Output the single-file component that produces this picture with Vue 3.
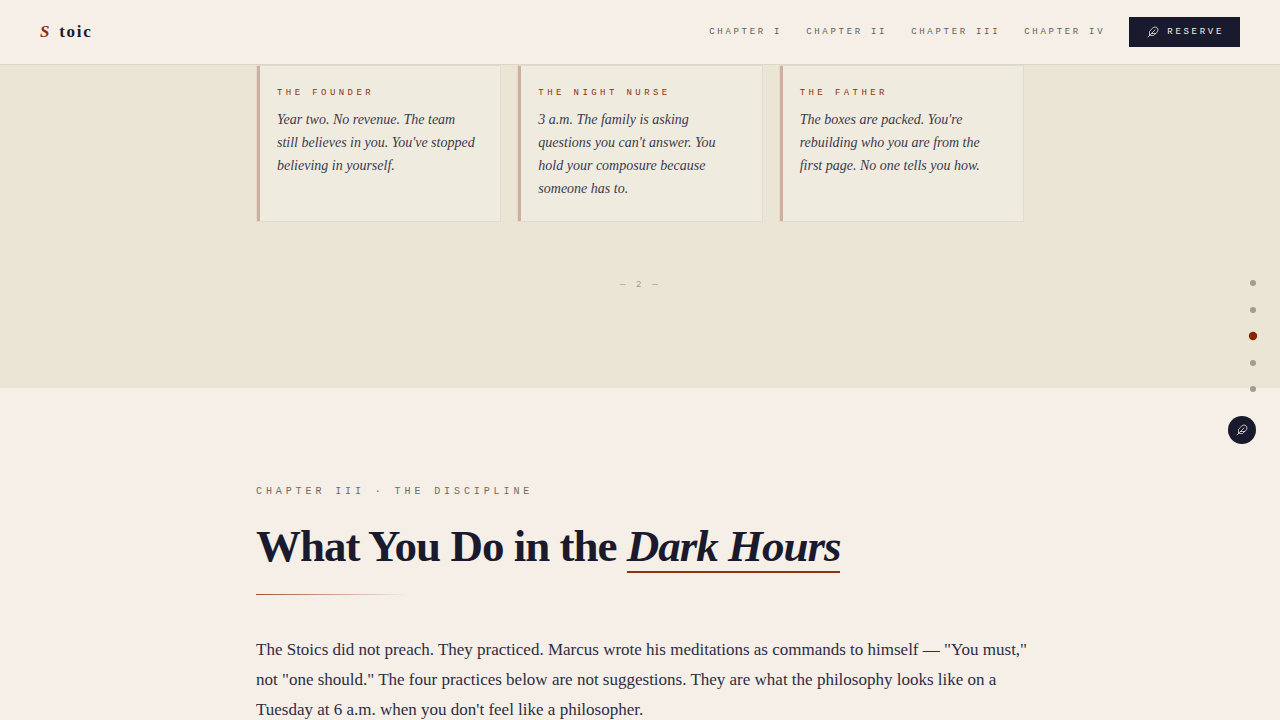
<script setup>
const chapters = ['I', 'II', 'III', 'IV']

const voices = [
  { who: 'The Founder', text: "Year two. No revenue. The team still believes in you. You've stopped believing in yourself." },
  { who: 'The Night Nurse', text: "3 a.m. The family is asking questions you can't answer. You hold your composure because someone has to." },
  { who: 'The Father', text: "The boxes are packed. You're rebuilding who you are from the first page. No one tells you how." }
]

const sections = ['Cover', 'Chapter I', 'Chapter II', 'Chapter III', 'Chapter IV']
const current = 2
</script>

<template>
  <div class="page">
    <header class="topbar">
      <a class="brand" href="#"><span class="brand-mark">S</span><span>toic</span></a>
      <nav class="links" aria-label="Chapters">
        <a v-for="c in chapters" :key="c" class="link" :href="'#chapter-' + c">Chapter {{ c }}</a>
        <button type="button" class="reserve">
          <svg class="quill" viewBox="0 0 24 24" aria-hidden="true">
            <path d="M12.67 19a2 2 0 0 0 1.416-.588l6.154-6.172a6 6 0 0 0-8.49-8.49L5.586 9.914A2 2 0 0 0 5 11.328V18a1 1 0 0 0 1 1z" />
            <path d="M16 8 2 22" />
            <path d="M17.5 15H9" />
          </svg>
          Reserve
        </button>
      </nav>
    </header>

    <main>
      <section class="voices">
        <div class="column">
          <div class="cards">
            <article v-for="v in voices" :key="v.who" class="card">
              <h3 class="who">{{ v.who }}</h3>
              <p class="quote">{{ v.text }}</p>
            </article>
          </div>
          <p class="folio">— 2 —</p>
        </div>
      </section>

      <section id="chapter-III" class="chapter">
        <div class="column">
          <p class="eyebrow">Chapter III · The Discipline</p>
          <h2 class="title">What You Do in the <em>Dark Hours</em></h2>
          <div class="rule"></div>
          <p class="lede">
            The Stoics did not preach. They practiced. Marcus wrote his meditations as commands to
            himself — "You must," not "one should." The four practices below are not suggestions. They
            are what the philosophy looks like on a Tuesday at 6 a.m. when you don't feel like a
            philosopher.
          </p>
        </div>
      </section>
    </main>

    <aside class="rail">
      <nav class="dots" aria-label="Sections">
        <button
          v-for="(s, i) in sections"
          :key="s"
          type="button"
          class="dot"
          :class="{ active: i === current }"
          :aria-label="s"
        ></button>
      </nav>
      <button type="button" class="fab" aria-label="Reserve a copy">
        <svg class="quill" viewBox="0 0 24 24" aria-hidden="true">
          <path d="M12.67 19a2 2 0 0 0 1.416-.588l6.154-6.172a6 6 0 0 0-8.49-8.49L5.586 9.914A2 2 0 0 0 5 11.328V18a1 1 0 0 0 1 1z" />
          <path d="M16 8 2 22" />
          <path d="M17.5 15H9" />
        </svg>
      </button>
    </aside>
  </div>
</template>

<style>
body {
  background: #f5efe7;
}
</style>

<style scoped>
.page {
  min-height: 100vh;
  background: #f5efe7;
  color: #1a1a2e;
  font-family: "Liberation Serif", "Times New Roman", serif;
}

.topbar {
  position: sticky;
  top: 0;
  z-index: 2;
  display: flex;
  align-items: center;
  justify-content: space-between;
  box-sizing: border-box;
  height: 65px;
  padding: 0 40px;
  background: #f5efe7;
  border-bottom: 1px solid #dcd6c9;
}

.brand {
  display: flex;
  gap: 8px;
  color: #1a1a2e;
  font-size: 17px;
  font-weight: 700;
  line-height: 22px;
  letter-spacing: 0.1em;
  text-decoration: none;
}

.brand-mark {
  color: #8b2e0f;
  font-style: italic;
}

.links {
  display: flex;
  align-items: center;
  gap: 24px;
}

.link,
.reserve,
.who,
.folio,
.eyebrow {
  font-family: "Liberation Mono", "Courier New", monospace;
  text-transform: uppercase;
}

.link,
.reserve {
  font-size: 9px;
  line-height: 14px;
  letter-spacing: 0.3em;
}

.link {
  color: #635f59;
  text-decoration: none;
}

.reserve {
  display: flex;
  align-items: center;
  gap: 8px;
  height: 30px;
  padding: 0 16px 0 18px;
  border: 0;
  background: #1a1a2e;
  color: #f5efe7;
}

.quill {
  width: 12px;
  height: 12px;
  fill: none;
  stroke: #f5efe7;
  stroke-width: 1.5;
  stroke-linecap: round;
  stroke-linejoin: round;
}

.column {
  width: 60%;
  margin: 0 auto;
}

.voices {
  padding-bottom: 96px;
  background: #ebe5d6;
}

.cards {
  display: grid;
  grid-template-columns: repeat(3, 1fr);
  gap: 16px;
}

.card {
  position: relative;
  padding: 21px 22px 20px 20px;
  border: 1px solid #e1dccf;
  background: #f0ebdf;
}

.card::before {
  content: "";
  position: absolute;
  top: 0;
  bottom: 0;
  left: 0;
  width: 3px;
  background: #d0ae9f;
}

.who {
  margin: 0 0 9px;
  color: #8b3210;
  font-size: 9px;
  font-weight: 400;
  line-height: 12px;
  letter-spacing: 0.38em;
}

.quote {
  margin: 0 0 1px;
  color: #3a3a4e;
  font-size: 14px;
  font-style: italic;
  line-height: 23px;
}

.folio {
  margin: 56px 0 0;
  color: #a09b8e;
  font-size: 9px;
  line-height: 14px;
  letter-spacing: 0.3em;
  text-align: center;
}

.chapter {
  padding: 96px 0;
}

.eyebrow {
  margin: 0 0 19px;
  color: #6f6b65;
  font-size: 10px;
  line-height: 16px;
  letter-spacing: 0.39em;
}

.title {
  margin: 0;
  font-size: 45px;
  font-weight: 700;
  line-height: 54px;
  letter-spacing: -1px;
}

.title em {
  border-bottom: 2px solid #8b3512;
}

.rule {
  width: 20%;
  height: 1px;
  margin: 21px 0 40px;
  background: linear-gradient(to right, #a5523a, transparent);
}

.lede {
  margin: 0 -8px 0 0;
  color: #2d2d44;
  font-size: 17px;
  line-height: 30px;
}

.rail {
  position: fixed;
  top: 280px;
  right: 24px;
  z-index: 1;
  display: flex;
  flex-direction: column;
  align-items: flex-end;
  gap: 24px;
}

.dots {
  display: flex;
  flex-direction: column;
  justify-content: space-between;
  height: 112px;
}

.dot {
  width: 6px;
  height: 6px;
  padding: 0;
  border: 0;
  border-radius: 50%;
  background: #a09d91;
}

.dot.active {
  background: #8b2500;
  transform: scale(1.4);
}

.fab {
  display: flex;
  align-items: center;
  justify-content: center;
  width: 28px;
  height: 28px;
  padding: 0;
  border: 0;
  border-radius: 50%;
  background: #1a1a2e;
}
</style>
